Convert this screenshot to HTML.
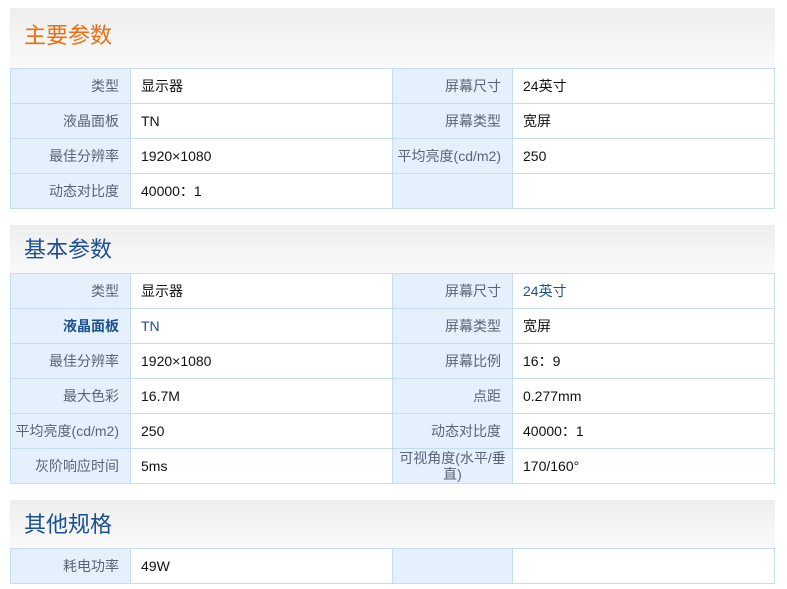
<!DOCTYPE html><html><head><meta charset="utf-8"><style>
body{margin:0;background:#fff;font-family:"Liberation Sans","Noto Sans CJK SC",sans-serif;}
.w{position:absolute;left:10px;width:765px;}
.h{background:linear-gradient(#eeeeee,#fafafa);font-size:22px;padding-left:14px;box-sizing:border-box;}
table{border-collapse:collapse;width:765px;table-layout:fixed;}
td{border:1px solid #c6dcf5;height:34px;font-size:14px;padding:0;color:#111;}
td.l{background:#e4f0fc;color:#5a6478;text-align:right;padding-right:11px;width:108px;}
td.v{padding-left:10px;}
.b{color:#1b4f93;}
</style></head><body>
<div class="w" style="top:8px"><div class="h" style="height:60px;line-height:56px;color:#f26c0d">主要参数</div>
<table><col style="width:120px"><col style="width:262px"><col style="width:120px"><col>
<tr><td class="l">类型</td><td class="v">显示器</td><td class="l">屏幕尺寸</td><td class="v">24英寸</td></tr>
<tr><td class="l">液晶面板</td><td class="v">TN</td><td class="l">屏幕类型</td><td class="v">宽屏</td></tr>
<tr><td class="l">最佳分辨率</td><td class="v">1920×1080</td><td class="l">平均亮度(cd/m2)</td><td class="v">250</td></tr>
<tr><td class="l">动态对比度</td><td class="v">40000：1</td><td class="l"></td><td class="v"></td></tr>
</table></div>
<div class="w" style="top:225px"><div class="h" style="height:48px;line-height:50px;color:#1b4f93">基本参数</div>
<table><col style="width:120px"><col style="width:262px"><col style="width:120px"><col>
<tr><td class="l">类型</td><td class="v">显示器</td><td class="l">屏幕尺寸</td><td class="v b">24英寸</td></tr>
<tr><td class="l b" style="font-weight:bold;color:#1b4f93">液晶面板</td><td class="v b">TN</td><td class="l">屏幕类型</td><td class="v">宽屏</td></tr>
<tr><td class="l">最佳分辨率</td><td class="v">1920×1080</td><td class="l">屏幕比例</td><td class="v">16：9</td></tr>
<tr><td class="l">最大色彩</td><td class="v">16.7M</td><td class="l">点距</td><td class="v">0.277mm</td></tr>
<tr><td class="l">平均亮度(cd/m2)</td><td class="v">250</td><td class="l">动态对比度</td><td class="v">40000：1</td></tr>
<tr><td class="l">灰阶响应时间</td><td class="v">5ms</td><td class="l" style="line-height:16px;text-align:center;padding:0">可视角度(水平/垂<br>直)</td><td class="v">170/160°</td></tr>
</table></div>
<div class="w" style="top:500px"><div class="h" style="height:48px;line-height:50px;color:#1b4f93">其他规格</div>
<table><col style="width:120px"><col style="width:262px"><col style="width:120px"><col>
<tr><td class="l">耗电功率</td><td class="v">49W</td><td class="l"></td><td class="v"></td></tr>
</table></div>
</body></html>
